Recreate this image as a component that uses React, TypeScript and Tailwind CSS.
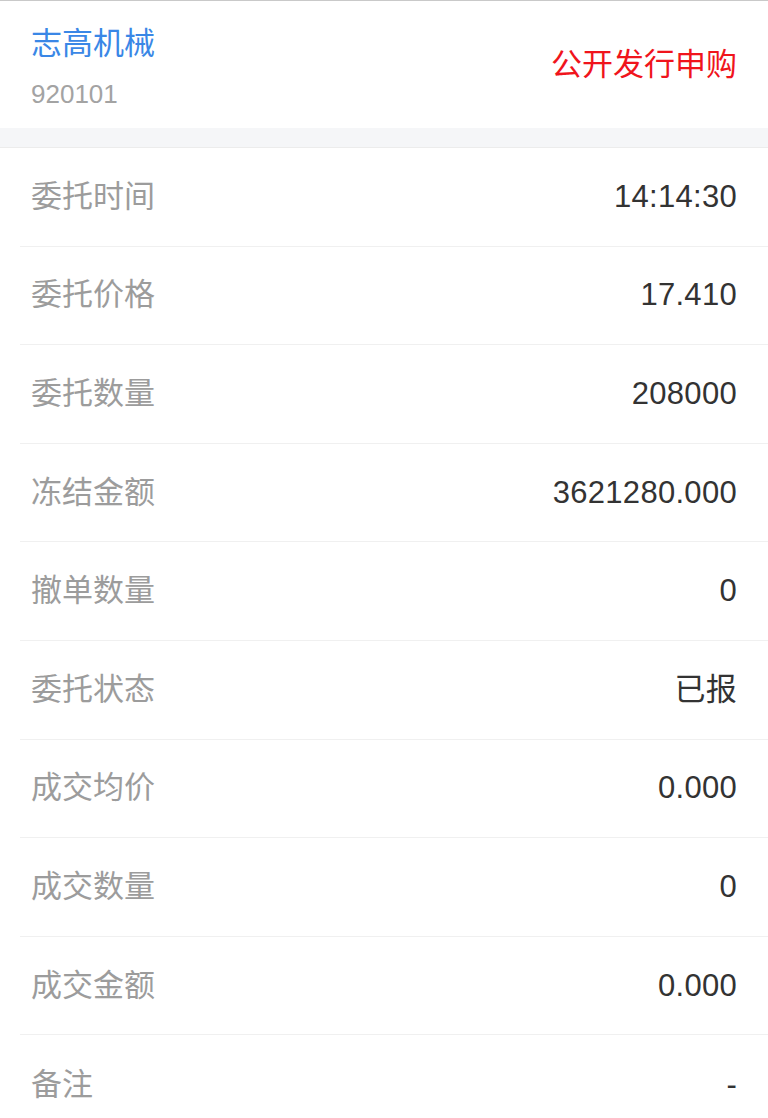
import React from 'react';

interface Row {
  label: string;
  value: string;
}

const rows: Row[] = [
  { label: '委托时间', value: '14:14:30' },
  { label: '委托价格', value: '17.410' },
  { label: '委托数量', value: '208000' },
  { label: '冻结金额', value: '3621280.000' },
  { label: '撤单数量', value: '0' },
  { label: '委托状态', value: '已报' },
  { label: '成交均价', value: '0.000' },
  { label: '成交数量', value: '0' },
  { label: '成交金额', value: '0.000' },
  { label: '备注', value: '-' },
];

const font = "font-['Liberation_Sans','Noto_Sans_CJK_SC',sans-serif]";

const App = () => {
  return (
    <div className={`min-h-[1118px] w-[768px] bg-white ${font}`}>
      {/* Header */}
      <div className="flex h-[128px] items-center justify-between border-t border-[#c9c9c9] pl-[31px] pr-[31px]">
        <div className="flex flex-col self-start pt-[25px]">
          <span className="text-[31px] leading-[36px] text-[#3a87e6]">志高机械</span>
          <span className="mt-[17px] text-[26px] leading-[30px] text-[#a3a3a3]">920101</span>
        </div>
        <span className="text-[31px] leading-[36px] text-[#f0141c]">公开发行申购</span>
      </div>

      {/* Gap */}
      <div className="h-[20px] border-b border-[#ececec] bg-[#f5f6f8]" />

      {/* Detail rows */}
      <div className="pl-[20px]">
        {rows.map((row, i) => (
          <div
            key={row.label}
            className={`flex h-[98.6px] items-center justify-between pl-[11px] pr-[31px] ${
              i < rows.length - 1 ? 'border-b border-[#f0f0f0]' : ''
            }`}
          >
            <span className="text-[31px] leading-[36px] text-[#9c9c9c]">{row.label}</span>
            <span className="text-[31px] leading-[36px] tracking-[0.3px] text-[#333333]">{row.value}</span>
          </div>
        ))}
      </div>
    </div>
  );
};

export default App;
